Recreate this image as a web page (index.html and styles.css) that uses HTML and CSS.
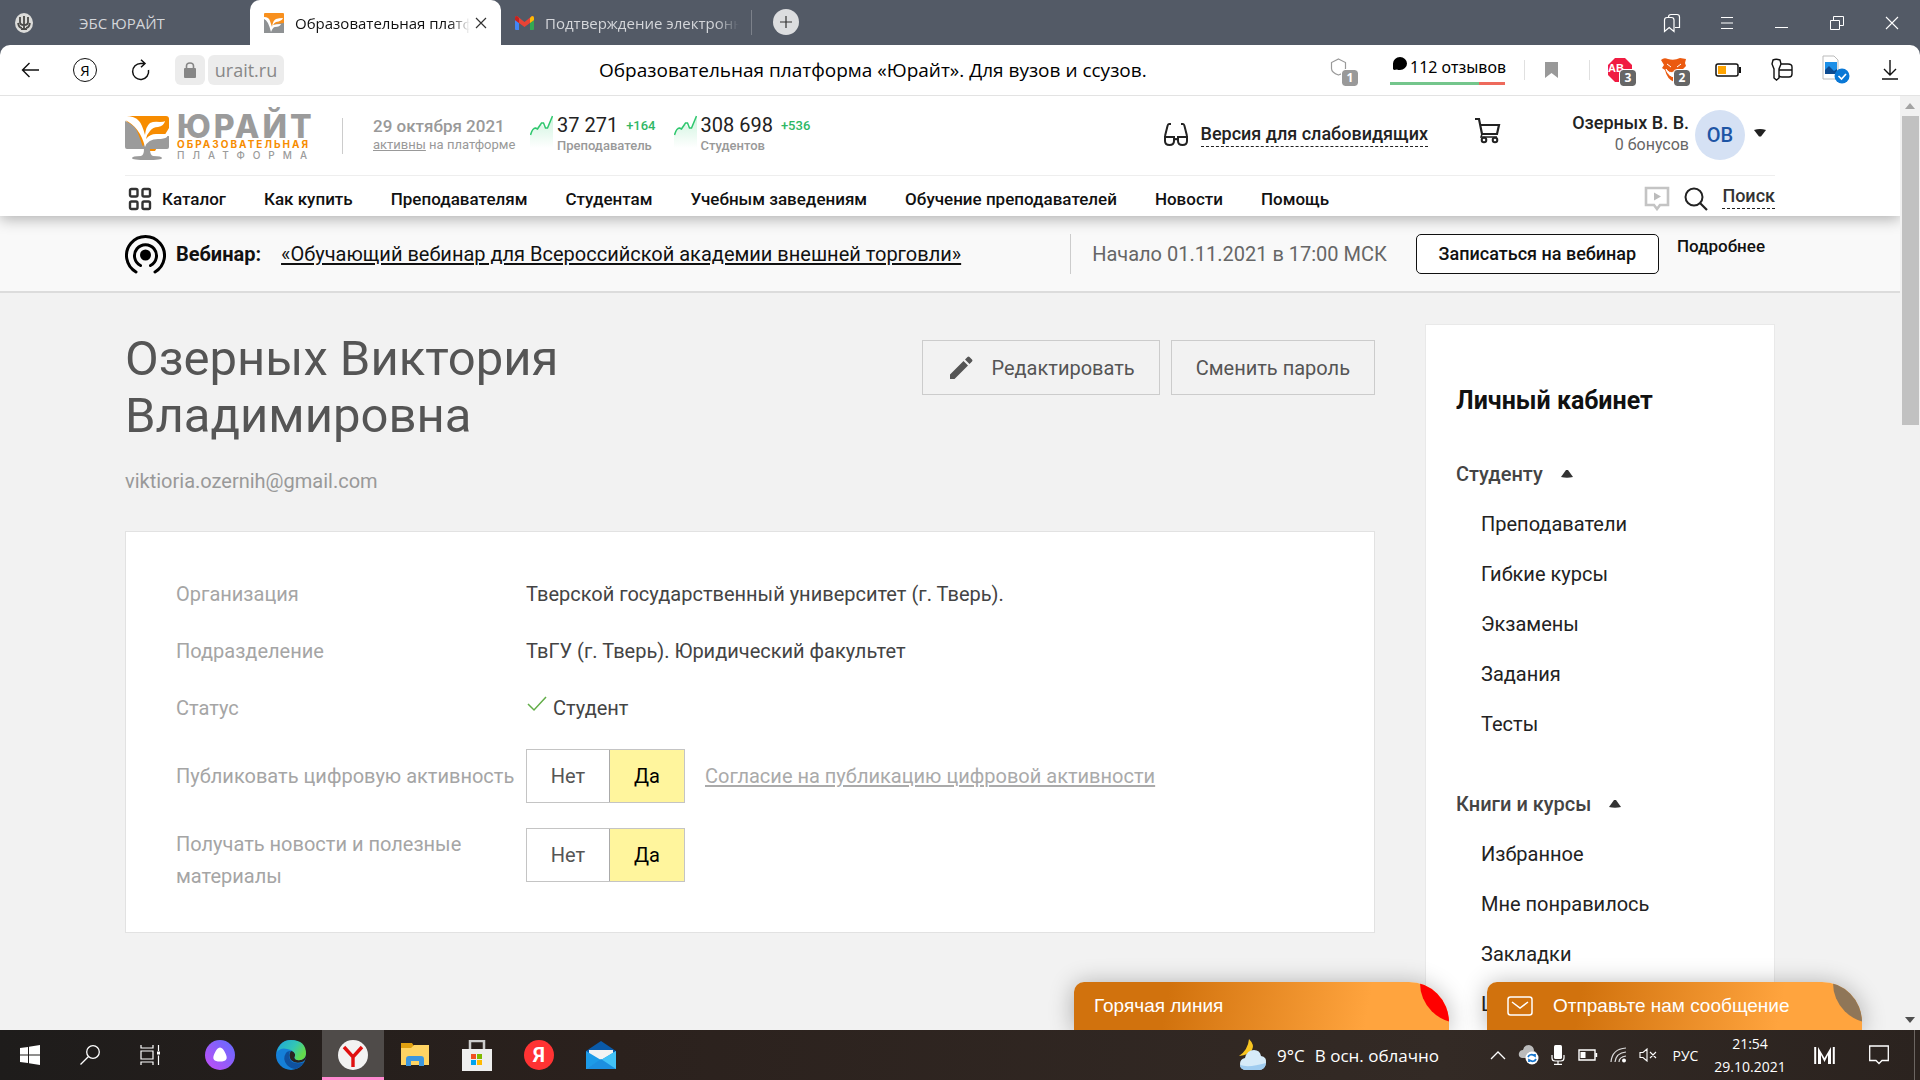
FILE: index.html
```html
<!DOCTYPE html>
<html lang="ru">
<head>
<meta charset="utf-8">
<title>Образовательная платформа «Юрайт». Для вузов и ссузов.</title>
<link rel="stylesheet" href="styles.css">
</head>
<body>
<div class="tabs">
  <button class="tab tab-first">
    <svg width="18" height="20" viewBox="0 0 18 20"><ellipse cx="9" cy="10" rx="9" ry="10" fill="#dcdcda"/><path d="M5 4v5q0 3 4 3t4-3V4M9 3v14M6 16h6M3 10q1 5 4 5M15 10q-1 5-4 5" fill="none" stroke="#4a4a48" stroke-width="1.8"/></svg>
    <span class="tab-text">ЭБС ЮРАЙТ</span>
  </button>
  <div class="tab tab-active">
    <svg width="20" height="20" viewBox="0 0 20 20"><rect width="20" height="20" rx="1" fill="#f8901e"/><path d="M0 4l5 3 3 7 3-3 9-1v10H0z" fill="#8f9294"/><path d="M0 4q5 0 6 4l2 6q1-7 4-8t7-1q-1 3-7 4-2 1-3 3 3-1 8-1-1 3-6 3-2 0-4 5Q4 7 0 6z" fill="#fff"/></svg>
    <span class="tab-text fade">Образовательная платформа</span>
    <button class="close" aria-label="Закрыть вкладку"><svg width="12" height="12" viewBox="0 0 12 12"><path d="M1 1l10 10M11 1L1 11" stroke="#333" stroke-width="1.2"/></svg></button>
  </div>
  <button class="tab tab-mail">
    <svg width="19" height="14" viewBox="0 0 19 14"><path d="M0 2v11q0 1 1 1h3V5z" fill="#4285f4"/><path d="M19 2v11q0 1-1 1h-3V5z" fill="#34a853"/><path d="M0 2q0-2 2-2l7.500 6L17 0q2 0 2 2v2l-9.500 7L0 4z" fill="#ea4335"/><path d="M15 2l2-2q2 0 2 2v2l-4 3z" fill="#fbbc04"/><path d="M0 2q0-2 2-2l2 2v5L0 4z" fill="#c5221f"/></svg>
    <span class="tab-text fade">Подтверждение электронной</span>
  </button>
  <button class="plus" aria-label="Новая вкладка"><svg width="12" height="12" viewBox="0 0 12 12"><path d="M6 0v12M0 6h12" stroke="#333" stroke-width="1.2"/></svg></button>
  <div class="window-buttons">
    <button aria-label="Закладки"><svg width="18" height="20" viewBox="0 0 18 20"><path d="M1.500 18.500V7q0-2.500 2.500-2.500h4.500Q11 4.500 11 7v11.500l-4.800-4zM5.500 4q0-2.500 2.500-2.500h6q2.500 0 2.500 2.500v10.500H12" fill="none" stroke="#fff" stroke-width="1.2"/></svg></button>
    <button aria-label="Меню"><svg width="12" height="14" viewBox="0 0 12 14"><path d="M0 1.500h12M0 7h12M0 12.500h12" stroke="#fff" stroke-width="1.2"/></svg></button>
    <button aria-label="Свернуть"><svg width="13" height="13" viewBox="0 0 13 13"><path d="M0 11.500h13" stroke="#fff"/></svg></button>
    <button aria-label="Восстановить"><svg width="14" height="14" viewBox="0 0 14 14"><path d="M.5 4.500h9v9h-9zM3.500 4.500v-4h10v9h-4" fill="none" stroke="#fff"/></svg></button>
    <button aria-label="Закрыть"><svg width="14" height="14" viewBox="0 0 14 14"><path d="M1 1l12 12M13 1L1 13" stroke="#fff" stroke-width="1.1"/></svg></button>
  </div>
</div>

<div class="toolbar">
  <div class="tool-left">
    <button aria-label="Назад"><svg width="18" height="16" viewBox="0 0 18 16"><path d="M18 8H1.500M8.500 1L1.500 8l7 7" fill="none" stroke="#111" stroke-width="1.4"/></svg></button>
    <button class="ya">Я</button>
    <button aria-label="Обновить"><svg width="20" height="22" viewBox="0 0 20 22"><path d="M17.500 11A8 8 0 1 1 10 4.500h3M10 .8l4 3.700-4 3.700" fill="none" stroke="#111" stroke-width="1.5"/></svg></button>
  </div>
  <div class="address">
    <span class="lock"><svg width="12" height="17" viewBox="0 0 12 17"><rect y="6" width="12" height="10" rx="1" fill="#868686"/><path d="M2.500 7V4q0-3 3.500-3t3.500 3v3" fill="none" stroke="#868686" stroke-width="1.600"/></svg></span>
    <span class="host">urait.ru</span>
  </div>
  <div class="page-title">Образовательная платформа «Юрайт». Для вузов и ссузов.</div>
  <div class="tool-right">
    <span class="ext shield"><svg width="17" height="18" viewBox="0 0 17 18"><path d="M8.500 1l7 3.500v6q0 4-7 6.500-7-2.500-7-6.500v-6z" fill="none" stroke="#999" stroke-width="1.2"/></svg><b class="badge light">1</b></span>
    <a class="reviews" href="#"><svg width="15" height="15" viewBox="0 0 15 15"><path d="M2 14l-1-1V7.500A7 6.500 0 1 1 8 14q-2 0-3-.5z" fill="#000"/></svg>112 отзывов</a>
    <span class="mark"><svg width="13" height="16" viewBox="0 0 13 16"><path d="M0 0h13v16l-6.500-5L0 16z" fill="#999"/></svg></span>
    <div class="exts">
      <span class="ext"><svg width="26" height="26" viewBox="0 0 26 26"><path d="M8 1h10l7 7v10l-7 7H8l-7-7V8z" fill="#f01c42"/></svg><i class="abp">AB</i><b class="badge">3</b></span>
      <span class="ext"><svg width="26" height="26" viewBox="0 0 26 26"><path d="M0 3q3-3 7-1 6 2 12-1l6 1-1 4 1 3-3 3q-1 9-9 13Q6 22 4 13L1 11l2-3z" fill="#eb5a10"/><path d="M6 7l4 3M20 7l-4 3M5 12q3 5 8 3 5 2 8-3-1 7-8 8-6-1-8-8z" fill="#fff" stroke="#fff"/></svg><b class="badge">2</b></span>
      <span class="ext"><svg width="26" height="14" viewBox="0 0 26 14"><rect x="1" y="1" width="22" height="12" rx="2" fill="none" stroke="#111" stroke-width="1.5"/><rect x="3" y="3" width="8" height="8" fill="#ffa400"/><path d="M25 4v6" stroke="#111" stroke-width="2"/></svg></span>
      <span class="ext"><svg width="24" height="24" viewBox="0 0 24 24"><path d="M2 6l1-4q3-1.500 7 0l1 4-2 5v9l-2.500 2L4 20v-9zM11 6h7q4 0 4 3v7q0 3-3 3h-7q-3 0-3-2M9.500 12H22" fill="none" stroke="#111" stroke-width="1.400"/></svg></span>
      <span class="ext"><svg width="28" height="30" viewBox="0 0 28 30"><path d="M1 1h11l4 4v19H1z" fill="#fff" stroke="#bbb"/><rect x="3" y="7" width="12" height="12" fill="#1c8fe8"/><path d="M3 19v-4l4-4 5 5 3-2v5z" fill="#0d4b91"/><circle cx="20" cy="21" r="7.500" fill="#0a78d6"/><path d="M16.500 21l3 3 4.500-5" fill="none" stroke="#fff" stroke-width="1.700"/></svg></span>
      <span class="ext"><svg width="16" height="20" viewBox="0 0 16 20"><path d="M8 0v15M2 9l6 6 6-6M0 19h16" fill="none" stroke="#111" stroke-width="1.400"/></svg></span>
    </div>
  </div>
</div>

<div class="viewport">
  <div class="page">
    <header class="site-head">
      <div class="wrap head-top">
        <a class="logo" href="#" aria-label="Юрайт">
          <svg width="44" height="45" viewBox="0 0 44 45"><path d="M3 1h38q3 0 3 3v9L30 36H20L0 4z" fill="#f78c00"/><path d="M0 6q11 4 14 15l4 11q1-6 8-8t18-3v11q0 2-2 2H2q-2 0-2-2z" fill="#9b9b9b"/><path d="M0 1q10 0 14 5 3 3 6 14 1-9 5-12 4-2 10-1 4 0 5-1-1 5-7 6-5 0-8 4-3 3-4 8 4-5 10-5h11v3q-3 2-9 2-10 0-13 8Q15 12 0 5z" fill="#fff"/><path d="M19 34h6q0 6 3 7 9 0 9 2 0 2-15 2T7 43q0-2 9-2 3-1 3-7z" fill="#9b9b9b"/></svg>
          <span class="logo-words">
            <span class="logo-name">ЮРАЙТ</span>
            <span class="logo-sub">ОБРАЗОВАТЕЛЬНАЯ</span>
            <span class="logo-sub grey">ПЛАТФОРМА</span>
          </span>
        </a>
        <div class="today"><div class="date">29 октября 2021</div><div class="small"><a href="#">активны</a> на платформе</div></div>
        <div class="stat">
          <svg width="23" height="34" viewBox="0 0 23 34"><defs><linearGradient id="gr" x1="0" y1="0" x2="0" y2="1"><stop offset="0" stop-color="#cdf3dd"/><stop offset="1" stop-color="#fff"/></linearGradient></defs><path d="M0 20l4-8h3l4-3 3 3 3 1 6-12v32H0z" fill="url(#gr)"/><path d="M.5 20q2-7 5-7l2 1 4-6h2l2 5h2l5-12" fill="none" stroke="#2fc76e" stroke-width="1.500"/></svg>
          <div><div class="num">37 271 <span>+164</span></div><div class="small strong">Преподаватель</div></div>
        </div>
        <div class="stat">
          <svg width="23" height="34" viewBox="0 0 23 34"><path d="M0 20l4-8h3l4-3 3 3 3 1 6-12v32H0z" fill="url(#gr)"/><path d="M.5 20q2-7 5-7l2 1 4-6h2l2 5h2l5-12" fill="none" stroke="#2fc76e" stroke-width="1.500"/></svg>
          <div><div class="num">308 698 <span>+536</span></div><div class="small strong">Студентов</div></div>
        </div>
        <div class="head-right">
          <a class="vision" href="#"><svg width="26" height="24" viewBox="0 0 26 24"><path d="M8 1H6Q5 1 4.500 3L2 13M18 1h2q1 0 1.500 2L24 13M11 17q2-2 4 0" fill="none" stroke="#222" stroke-width="2"/><path d="M2 14h9v4q0 4-4.500 4T2 18zM15 14h9v4q0 4-4.500 4T15 18z" fill="none" stroke="#222" stroke-width="2"/></svg><span>Версия для слабовидящих</span></a>
          <a class="cart" href="#" aria-label="Корзина"><svg width="26" height="27" viewBox="0 0 26 27"><path d="M0 2h4l3 15h15l2-9H5" fill="none" stroke="#222" stroke-width="2.200"/><circle cx="9" cy="23" r="2.300" fill="none" stroke="#222" stroke-width="2"/><circle cx="20" cy="23" r="2.300" fill="none" stroke="#222" stroke-width="2"/><path d="M7 17l-1 3h16" fill="none" stroke="#222" stroke-width="1.500"/></svg></a>
          <div class="who"><div class="who-name">Озерных В. В.</div><div class="bonus">0 бонусов</div></div>
          <button class="avatar">ОВ</button>
          <svg class="caret" width="12" height="8" viewBox="0 0 12 8"><path d="M0 1q6-2 12 0L7 7.500H5z" fill="#222"/></svg>
        </div>
      </div>
      <nav class="wrap nav">
        <a href="#" class="cat"><svg width="24" height="24" viewBox="0 0 24 24"><g fill="none" stroke="#333" stroke-width="2.400"><rect x="2" y="2" width="7.500" height="7.500" rx="1.500"/><rect x="14.500" y="2" width="7.500" height="7.500" rx="1.500"/><rect x="2" y="14.500" width="7.500" height="7.500" rx="1.500"/><rect x="14.500" y="14.500" width="7.500" height="7.500" rx="1.500"/></g></svg>Каталог</a>
        <a href="#">Как купить</a><a href="#">Преподавателям</a><a href="#">Студентам</a><a href="#">Учебным заведениям</a><a href="#">Обучение преподавателей</a><a href="#">Новости</a><a href="#">Помощь</a>
        <div class="nav-right">
          <svg width="26" height="25" viewBox="0 0 26 25"><path d="M2 2h22v17h-8l-3 4-3-4H2z" fill="none" stroke="#c4c4c4" stroke-width="2.600"/><path d="M10 6.500l7 4-7 4z" fill="#bbb"/></svg>
          <svg width="24" height="24" viewBox="0 0 24 24"><circle cx="10" cy="10" r="8.500" fill="none" stroke="#222" stroke-width="2"/><path d="M16 16l7 7" stroke="#222" stroke-width="2.200"/></svg>
          <a href="#">Поиск</a>
        </div>
      </nav>
    </header>

    <section class="webinar">
      <div class="wrap web-in">
        <svg width="41" height="41" viewBox="0 0 41 41"><circle cx="20.500" cy="22" r="5.500"/><path d="M15.500 31.500a11 11 0 1 1 10 0M11 38a19 19 0 1 1 19 0" transform="translate(0 1)" fill="none" stroke="#000" stroke-width="3" stroke-linecap="round"/></svg>
        <strong>Вебинар:</strong>
        <a class="web-link" href="#">«Обучающий вебинар для Всероссийской академии внешней торговли»</a>
        <div class="web-right">
          <span class="web-time">Начало 01.11.2021 в 17:00 МСК</span>
          <button class="signup">Записаться на вебинар</button>
          <a class="more" href="#">Подробнее</a>
        </div>
      </div>
    </section>

    <div class="wrap body">
      <main>
        <div class="title-row">
          <h1>Озерных Виктория Владимировна</h1>
          <div class="actions">
            <button class="edit"><svg width="24" height="24" viewBox="0 0 24 24"><path d="M1 18.500L14.500 5 19 9.500 5.500 23H1zM16 3.500l2.500-2.500q1-1 2 0L23 3.500q1 1 0 2L20.500 8z" fill="#555"/></svg>Редактировать</button>
            <button>Сменить пароль</button>
          </div>
        </div>
        <div class="email">viktioria.ozernih@gmail.com</div>
        <div class="card">
          <div class="row"><div class="label">Организация</div><div>Тверской государственный университет (г. Тверь).</div></div>
          <div class="row"><div class="label">Подразделение</div><div>ТвГУ (г. Тверь). Юридический факультет</div></div>
          <div class="row"><div class="label">Статус</div><div class="status"><svg width="20" height="16" viewBox="0 0 20 16"><path d="M1 8l6 6L19 1" fill="none" stroke="#62ad48" stroke-width="1.500"/></svg>Студент</div></div>
          <div class="row mid"><div class="label" id="pub">Публиковать цифровую активность</div>
            <div class="choice"><div class="toggle" role="radiogroup" aria-labelledby="pub"><label><input type="radio" name="pub">Нет</label><label><input type="radio" name="pub" checked>Да</label></div><a href="#">Согласие на публикацию цифровой активности</a></div></div>
          <div class="row"><div class="label" id="news">Получать новости и полезные материалы</div>
            <div class="choice"><div class="toggle" role="radiogroup" aria-labelledby="news"><label><input type="radio" name="news">Нет</label><label><input type="radio" name="news" checked>Да</label></div></div></div>
        </div>
      </main>
      <aside>
        <h2>Личный кабинет</h2>
        <button class="group">Студенту <svg width="12" height="8" viewBox="0 0 12 8"><path d="M5 0h2l5 7q-6 1.500-12 0z" fill="#333"/></svg></button>
        <ul><li><a href="#">Преподаватели</a></li><li><a href="#">Гибкие курсы</a></li><li><a href="#">Экзамены</a></li><li><a href="#">Задания</a></li><li><a href="#">Тесты</a></li></ul>
        <button class="group">Книги и курсы <svg width="12" height="8" viewBox="0 0 12 8"><path d="M5 0h2l5 7q-6 1.500-12 0z" fill="#333"/></svg></button>
        <ul><li><a href="#">Избранное</a></li><li><a href="#">Мне понравилось</a></li><li><a href="#">Закладки</a></li><li><a href="#">Цитаты</a></li></ul>
      </aside>
    </div>
  </div>
  <div class="scroll"><svg width="10" height="6" viewBox="0 0 10 6"><path d="M0 6h10L5 0z" fill="#a3a3a3"/></svg><div class="thumb"></div><svg width="10" height="6" viewBox="0 0 10 6"><path d="M0 0h10L5 6z" fill="#505050"/></svg></div>
  <div class="chats">
    <button class="chat hot">Горячая линия</button>
    <button class="chat mail"><svg width="26" height="22" viewBox="0 0 26 22"><rect x="1" y="2" width="24" height="18" rx="2.500" fill="none" stroke="#fff" stroke-width="1.500"/><path d="M5 7l8 6 8-6" fill="none" stroke="#fff" stroke-width="1.500"/></svg>Отправьте нам сообщение</button>
  </div>
</div>

<div class="taskbar">
  <button aria-label="Пуск"><svg width="20" height="20" viewBox="0 0 20 20"><path d="M0 3l8-1v7.500H0zM9 1.800L20 0v9.500H9zM0 10.500h8V18l-8-1zM9 10.500h11V20L9 18.200z" fill="#fff"/></svg></button>
  <button aria-label="Поиск"><svg width="20" height="20" viewBox="0 0 20 20"><circle cx="13" cy="7" r="6.300" fill="none" stroke="#fff" stroke-width="1.300"/><path d="M8.500 11.500L.5 19.500" stroke="#fff" stroke-width="1.300"/></svg></button>
  <button aria-label="Представление задач"><svg width="20" height="20" viewBox="0 0 20 20"><path d="M1 0v3h12V0M1 20v-3h12v3M1 6h12v8H1zM18.500 0v6M18.500 10.500V20" fill="none" stroke="#fff" stroke-width="1.200"/><rect x="17" y="6.500" width="3" height="3" fill="#fff"/></svg></button>
  <button class="alice" aria-label="Алиса"><svg width="30" height="30" viewBox="0 0 30 30"><defs><linearGradient id="al" x1="0" y1="1" x2="1" y2="0"><stop offset="0" stop-color="#c44df5"/><stop offset="1" stop-color="#5f6cff"/></linearGradient></defs><circle cx="15" cy="15" r="15" fill="url(#al)"/><path d="M15 7.500q3 0 5.500 6 4 8-5.500 8t-5.500-8q2.500-6 5.500-6z" fill="#fff"/></svg></button>
  <button aria-label="Edge"><svg width="30" height="30" viewBox="0 0 30 30"><defs><linearGradient id="eg" x1="0" y1="0" x2="1" y2=".5"><stop offset="0" stop-color="#1ea5dc"/><stop offset=".6" stop-color="#33c6b5"/><stop offset="1" stop-color="#64db4a"/></linearGradient></defs><circle cx="15" cy="15" r="15" fill="#1580d8"/><path d="M10 13q-4 6 1 12 4 4 9 4 5-2 8-7-4 2-8 1-7-1-7-8 0-3 2-4-4 0-5 2z" fill="#0f519f"/><path d="M15 11q-3 4 0 9 4 4 11 2l2-1q3-3 2-7-1 7-9 6-4-1-2-4 1-4-4-5z" fill="#2a2320"/><path d="M1 12q4-6 14-2 5 3 4 6-1 3 2 4 8 1 9-6Q30 0 15 0 4 0 1 12z" fill="url(#eg)"/></svg></button>
  <button class="current" aria-label="Яндекс Браузер"><svg width="30" height="30" viewBox="0 0 30 30"><circle cx="15" cy="15" r="15" fill="#f2f2f2"/><path d="M6 7l9 10 9-10M15 16v11" fill="none" stroke="#e01010" stroke-width="3.400"/></svg></button>
  <button aria-label="Проводник"><svg width="28" height="24" viewBox="0 0 28 24"><path d="M0 0h11l2 3h10v5H0z" fill="#e0a010"/><path d="M0 5h10l3-3h15v20H0z" fill="#ffd463"/><path d="M5 23v-7q0-3 3-3h12q3 0 3 3v7h-5v-5h-8v5z" fill="#3d97df"/></svg></button>
  <button aria-label="Магазин"><svg width="30" height="31" viewBox="0 0 30 31"><path d="M8 10V1h14v9" fill="none" stroke="#ccc" stroke-width="2.500"/><rect y="9" width="30" height="22" fill="#eee"/><path d="M9 14h5v5H9z" fill="#f25022"/><path d="M15 14h5v5h-5z" fill="#7fba00"/><path d="M9 20h5v5H9z" fill="#00a4ef"/><path d="M15 20h5v5h-5z" fill="#ffb900"/></svg></button>
  <button aria-label="Яндекс"><span class="ya-red">Я</span></button>
  <button aria-label="Почта"><svg width="30" height="28" viewBox="0 0 30 28"><path d="M0 10L15 0l15 10v7H0z" fill="#0a5aa8"/><path d="M3 9h24v10H3z" fill="#f3f3f3"/><path d="M0 10l15 9 15-9v18H0z" fill="#1d9be8"/><path d="M0 28l30-18v18z" fill="#42c2f7"/><path d="M0 28h30L15 18z" fill="#1c8fe0"/></svg></button>
  <div class="tray">
    <button class="weather"><svg width="29" height="32" viewBox="0 0 29 32"><path d="M11 0q6 6 3 11T1 17Q10 11 11 0z" fill="#f8c521"/><path d="M9 31q-7 0-7-6 0-5 5-6 2-8 9-8 6 0 7 6 6 1 5 7-1 7-7 7z" fill="#d6ebf9"/><path d="M9 31q-7 0-7-5 9 3 26-2-1 7-7 7z" fill="#9fccf0"/></svg><span>9°C</span><span>В осн. облачно</span></button>
    <button class="ti" aria-label="Скрытые значки"><svg width="16" height="9" viewBox="0 0 16 9"><path d="M1 8l7-7 7 7" fill="none" stroke="#fff" stroke-width="1.300"/></svg></button>
    <button class="ti" aria-label="OneDrive"><svg width="21" height="20" viewBox="0 0 21 20"><path d="M4 13q-4-1-3-5 1-3 4-3 1-5 6-5 5 1 5 6 3 1 3 4l-4 3z" fill="#bbb"/><circle cx="14" cy="13" r="6.500" fill="#fff"/><path d="M10 12q2-4 7-1V9M18 14q-2 4-7 1v2" fill="none" stroke="#1473cc" stroke-width="1.700"/></svg></button>
    <button class="ti" aria-label="Микрофон"><svg width="14" height="20" viewBox="0 0 14 20"><rect x="3" width="8" height="14" rx="1.500" fill="#fff"/><path d="M1 10v3q0 3 3 3h6q3 0 3-3v-3M7 16v3M3 19.300h8" fill="none" stroke="#fff" stroke-width="1.200"/></svg></button>
    <button class="ti" aria-label="Батарея"><svg width="20" height="12" viewBox="0 0 20 12"><path d="M1 1h16v10H1zM18.500 4v4" fill="none" stroke="#fff" stroke-width="1.400"/><rect x="2.500" y="3" width="5" height="6" fill="#fff"/></svg></button>
    <button class="ti" aria-label="Сеть"><svg width="17" height="16" viewBox="0 0 17 16"><path d="M1 15Q2 2 16 1M5 15Q6 6 16 5M9 15q0-5 7-6" fill="none" stroke="#ddd" stroke-width="1.200"/><circle cx="14" cy="13.500" r="2" fill="#fff"/></svg></button>
    <button class="ti" aria-label="Звук"><svg width="18" height="14" viewBox="0 0 18 14"><path d="M1 4.500h3L8 1v12L4 9.500H1zM11 4l6 6M17 4l-6 6" fill="none" stroke="#fff" stroke-width="1.100"/></svg></button>
    <button class="lang">РУС</button>
    <button class="clock"><span>21:54</span><span>29.10.2021</span></button>
    <button class="mm" aria-label="M"><svg width="21" height="17" viewBox="0 0 21 17"><path d="M1.200 17V0M19.800 17V0" stroke="#fff" stroke-width="2"/><path d="M4 17V0l6.500 11L17 0v17h-3V8l-3.500 7L7 8v9z" fill="#fff"/></svg></button>
    <button class="notes" aria-label="Уведомления"><svg width="20" height="20" viewBox="0 0 20 20"><path d="M.7 1h18.600v14.500h-6.300L10 18.500l-3-3H.7z" fill="none" stroke="#fff" stroke-width="1.300"/></svg></button>
    <span class="desk"></span>
  </div>
</div>
</body>
</html>
```
FILE: styles.css
```css
* { box-sizing: border-box; }
body { margin: 0; height: 100vh; display: flex; flex-direction: column; overflow: hidden; font-family: Roboto, sans-serif; font-size: 20px; color: #444; background: #535a66; }
button { font: inherit; color: inherit; background: none; border: 0; padding: 0; cursor: pointer; }
a { color: inherit; text-decoration: none; }
svg { flex: none; display: block; }

/* Browser tab strip */
.tabs { flex: none; height: 45px; display: flex; background: #535a66; color: #d4d6da; font: 15px "Open Sans", sans-serif; }
.tab { display: flex; align-items: center; height: 45px; white-space: nowrap; }
.tab-first { width: 250px; padding-left: 15px; gap: 46px; }
.tab-active { width: 251px; padding: 0 14px; gap: 11px; background: #fff; color: #111; border-radius: 10px 10px 0 0; }
.tab-text { overflow: hidden; text-align: left; }
.fade { flex: 1; mask-image: linear-gradient(90deg, #000 88%, transparent); }
.tab-active .fade { margin-right: -6px; }
.tab-mail { width: 251px; height: 25px; margin-top: 10px; padding: 0 12px 0 14px; gap: 11px; border-right: 1px solid #7c818a; }
.plus { width: 26px; height: 26px; margin: 9px 0 0 21px; border-radius: 50%; background: #dcdddf; display: grid; place-items: center; }
.window-buttons { margin-left: auto; padding-right: 1px; display: flex; }
.window-buttons button { width: 55px; display: grid; place-items: center; }

/* Address bar */
.toolbar { flex: none; height: 51px; display: flex; align-items: center; background: #fff; border-bottom: 1px solid #e3e3e3; border-radius: 10px 10px 0 0; font-family: "Open Sans", sans-serif; color: #000; }
.tool-left { display: flex; padding-left: 2px; }
.tool-left button { width: 55px; height: 30px; display: grid; place-items: center; }
.tool-left .ya { width: 24px; height: 24px; margin: 3px 16px; border: 1px solid #111; border-radius: 50%; font-size: 15px; line-height: 20px; }
.address { display: flex; gap: 3px; margin-left: 7px; font-size: 18px; color: #888; }
.lock, .host { height: 30px; border-radius: 6px; background: #ececec; display: grid; place-items: center; }
.lock { width: 30px; }
.host { width: 76px; }
.page-title { flex: 1; padding-left: 315px; font-size: 19px; white-space: nowrap; }
.tool-right { display: flex; align-items: center; height: 50px; }
.tool-right > * { flex: none; }
.ext { position: relative; width: 54px; display: grid; place-items: center; }
.badge { position: absolute; left: 50%; top: 50%; width: 16px; height: 16px; border-radius: 3px; background: #666; color: #fff; font: bold 12px/16px "Open Sans", sans-serif; text-align: center; outline: 1px solid #fff; }
.badge.light { background: #999; }
.abp { position: absolute; left: 15px; top: 6px; color: #fff; font: bold 11px/14px "Liberation Sans", sans-serif; }
.shield svg { margin: 0 8px 6px 0; }
.reviews { display: flex; align-items: flex-start; gap: 3px; height: 29px; margin: 0 19px 0 21px; padding-left: 2px; width: 115px; font: 16px/22px "Noto Sans", sans-serif; border-bottom: 3px solid; border-image: linear-gradient(90deg, #74c68c 77%, #ee6a5c 77%) 1; white-space: nowrap; }
.mark { height: 20px; padding: 2px 31px 0 20px; border: solid #e0e0e0; border-width: 0 1px; }
.exts { display: flex; width: 330px; padding-left: 3px; }

/* Page area */
.viewport { flex: 1; min-height: 0; display: flex; position: relative; background: #f2f2f2; }
.page { flex: 1; min-width: 0; overflow: hidden; }
.wrap { max-width: 1650px; margin: 0 auto; }
.site-head { position: relative; background: #fff; box-shadow: 0 3px 14px rgba(0, 0, 0, .3); }
.head-top { height: 80px; display: flex; border-bottom: 1px solid #eee; }
.logo { display: flex; gap: 8px; width: 217px; height: 66px; padding-top: 19px; }
.logo-words { display: flex; flex-direction: column; color: #9b9b9b; font-family: Inter, sans-serif; }
.logo-name { font-size: 32px; line-height: 24px; font-weight: 800; letter-spacing: 3px; }
.logo-sub { font-size: 10px; line-height: 11px; font-weight: 700; color: #f78c00; letter-spacing: 2px; }
.logo-sub.grey { color: #9b9b9b; letter-spacing: 8px; font-weight: 500; }
.today { width: 188px; height: 36px; margin-top: 22px; padding-left: 30px; border-left: 1px solid #ccc; color: #999; }
.date { font-size: 17px; line-height: 16px; font-weight: 500; }
.small { font-size: 13px; line-height: 22px; color: #999; white-space: nowrap; }
.small a { text-decoration: underline; }
.strong { line-height: 20px; font-weight: 500; }
.stat { display: flex; gap: 4px; margin: 19px 18px 0 0; }
.num { font-size: 20px; line-height: 20px; color: #222; white-space: nowrap; }
.num span { font-size: 13px; font-weight: 500; color: #2fb765; vertical-align: 2px; margin-left: 3px; }
.head-right { margin-left: auto; display: flex; }
.vision { display: flex; gap: 12px; margin-top: 27px; font-size: 18px; font-weight: 500; color: #222; }
.vision span { height: 24px; line-height: 22px; border-bottom: 1px dashed #222; }
.cart { margin: 21px 0 0 47px; }
.who { width: 188px; margin-top: 14px; text-align: right; font-size: 18px; line-height: 26px; color: #222; }
.who-name { font-weight: 500; }
.bonus { font-size: 16px; line-height: 18px; color: #666; }
.avatar { width: 50px; height: 50px; margin: 14px 9px 0 6px; border-radius: 50%; background: #d5e1f4; color: #1d55a5; font-weight: 500; }
.caret { margin: 33px 9px 0 0; }
.nav { height: 40px; display: flex; align-items: center; gap: 38px; padding: 5px 0 0 3px; font-size: 17px; font-weight: 500; color: #111; white-space: nowrap; }
.cat { display: flex; gap: 10px; align-items: center; }
.nav-right { margin-left: auto; display: flex; gap: 14px; align-items: center; color: #333; }
.nav-right a { border-bottom: 1px dashed #222; font-size: 18px; line-height: 24px; margin-bottom: 4px; }
.webinar { background: #f9f9f9; border-bottom: 2px solid #dcdcdc; color: #111; }
.web-in { height: 75px; display: flex; align-items: center; white-space: nowrap; }
.web-in strong { font-weight: 700; margin: 0 20px 0 10px; }
.web-link { text-decoration: underline; text-underline-offset: 2px; }
.web-right { margin-left: auto; display: flex; align-items: center; }
.web-time { border-left: 1px solid #ccc; padding-left: 21px; line-height: 40px; color: #666; }
.signup { height: 40px; margin: 0 18px 0 29px; width: 243px; border: 1px solid #111; border-radius: 5px; background: #fff; font-size: 18px; font-weight: 500; }
.more { font-size: 17px; font-weight: 500; margin: 0 10px 16px 0; }

/* Profile */
.body { display: flex; gap: 50px; align-items: flex-start; }
main { flex: 1; padding-top: 37px; }
.title-row { display: flex; justify-content: space-between; align-items: flex-start; }
h1 { margin: 0; width: 560px; font-size: 49px; line-height: 57px; font-weight: 400; color: #555; }
.actions { display: flex; gap: 11px; padding-top: 10px; }
.actions button { height: 55px; padding: 0 24px; border: 1px solid #ccc; display: flex; align-items: center; gap: 18px; color: #555; }
.actions .edit { padding-left: 26px; }
.email { margin: 25px 0 38px; line-height: 24px; color: #999; }
.card { padding: 46px 50px 40px; background: #fff; border: 1px solid #e2e2e2; display: grid; gap: 25px; line-height: 32px; }
.row { display: grid; grid-template-columns: 350px 1fr; }
.mid { align-items: center; }
.label { color: #a5a5a5; }
.status { display: flex; gap: 6px; }
.status svg { margin: 4px 0 0 1px; }
.choice { display: flex; gap: 20px; align-items: center; height: 54px; color: #aaa; }
.choice a { text-decoration: underline; text-decoration-thickness: 2px; text-underline-offset: 2px; }
.toggle { display: flex; height: 54px; color: #555; border: 1px solid #c4c4c4; }
.toggle label { display: grid; place-items: center; width: 82px; position: relative; }
.toggle label + label { width: 75px; }
.toggle input { position: absolute; inset: 0; margin: 0; appearance: none; }
.toggle label:has(input:checked) { background: #fff59d; color: #000; border-left: 1px solid #aaa; }
aside { flex: none; width: 350px; height: 1100px; margin-top: 31px; padding: 61px 30px; background: #fff; border: 1px solid #e9e9e9; line-height: 30px; color: #222; }
h2 { margin: 0 0 43px; font-size: 25px; font-weight: 700; color: #111; line-height: 30px; }
.group { display: flex; align-items: center; gap: 18px; font-weight: 500; color: #444; line-height: 30px; }
aside ul { list-style: none; margin: 10px 0 40px; padding: 0 0 0 25px; }
aside li { padding: 10px 0; }

.scroll { flex: none; width: 20px; background: #f1f1f1; display: flex; flex-direction: column; align-items: center; padding: 7px 0; }
.thumb { width: 17px; height: 309px; margin: 7px 0 auto; background: #c1c1c1; }
.chats { position: absolute; right: 58px; bottom: 0; height: 78px; padding: 30px 30px 0; margin: 0 -30px; overflow: hidden; display: flex; gap: 38px; }
.chat { position: relative; overflow: hidden; display: flex; align-items: center; gap: 20px; width: 375px; height: 48px; padding-left: 20px; border-radius: 10px 40px 0 0; background: linear-gradient(100deg, #d1720d 25%, #ffa43e 78%); box-shadow: 0 2px 24px rgba(0, 0, 0, .3); color: #fff; font: 19px "Liberation Sans", sans-serif; }
.chat::after { content: ""; position: absolute; width: 80px; height: 80px; right: -51px; top: -39px; border-radius: 50%; background: #f00; }
.mail::after { background: #8f7658; }

/* Taskbar */
.taskbar { flex: none; height: 50px; display: flex; background: linear-gradient(90deg, #1e1c1b, #2b211d 32%, #332a25 75%, #2b231f); color: #fff; font-family: "Open Sans", sans-serif; }
.taskbar > button { width: 62px; display: grid; place-items: center; }
.taskbar > button:nth-child(-n+3) { width: 60px; }
.taskbar > .alice { width: 80px; }
.current { background: #4f4b49; border-bottom: 3px solid #ff8ad0; padding-top: 3px; }
.ya-red { width: 30px; height: 30px; border-radius: 50%; background: #ff3333; font: 700 20px/30px Roboto, sans-serif; }
.tray { margin-left: auto; display: flex; }
.weather { display: flex; align-items: center; gap: 10px; margin-right: 44px; font-size: 17px; }
.ti { width: 30px; display: grid; place-items: center; }
.lang { width: 45px; font-size: 14px; }
.clock { width: 84px; font-size: 14px; line-height: 23px; display: flex; flex-direction: column; align-items: center; padding-top: 2px; }
.mm { width: 64px; display: grid; place-items: center; }
.notes { width: 46px; display: grid; place-items: center; }
.desk { width: 6px; margin-left: 12px; border-left: 1px solid #6b6561; }
```
